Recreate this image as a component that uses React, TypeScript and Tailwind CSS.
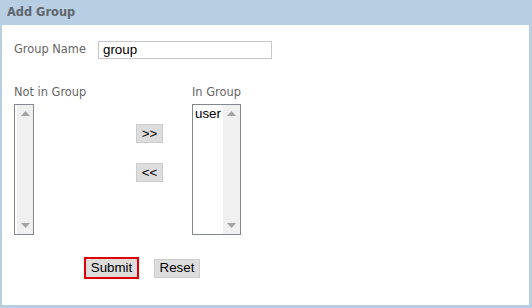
import React from 'react';

function ScrollList({ width, items = [] }: { width: string; items?: string[] }) {
  return (
    <div className={`${width} h-[131px] border border-[#828790] bg-white flex`}>
      <div className="flex-1 pl-[2px] pt-[1px] font-['Liberation_Sans',Arial,sans-serif] text-[13.33px] leading-[15px] text-black overflow-hidden">
        {items.map((it) => (
          <div key={it}>{it}</div>
        ))}
      </div>
      <div className="w-[17px] bg-[#f0f0f0] flex flex-col justify-between items-center py-[6px]">
        <svg width="9" height="5" viewBox="0 0 9 5">
          <path d="M0 5 L4.5 0 L9 5 Z" fill="#a3a3a3" />
        </svg>
        <svg width="9" height="5" viewBox="0 0 9 5">
          <path d="M0 0 L4.5 5 L9 0 Z" fill="#a3a3a3" />
        </svg>
      </div>
    </div>
  );
}

export default function App() {
  const label = "font-['DejaVu_Sans',Verdana,sans-serif] text-[11.4px] text-[#666]";
  const btn =
    "bg-[#dddddd] border border-[#cccccc] font-['Liberation_Sans',Arial,sans-serif] text-[13.33px] text-black leading-none flex items-center justify-center";
  return (
    <div className="w-[532px] h-[308px] bg-[#b8cfe3] pl-[2px] pr-[3px] pb-[3px] flex flex-col">
      {/* Header */}
      <div className="h-[25px] flex items-center pl-[5px] font-['DejaVu_Sans',Verdana,sans-serif] text-[11.4px] font-bold text-[#5f666d]">
        Add Group
      </div>

      {/* Body */}
      <div className="flex-1 bg-white pl-[12px] pt-[16px]">
        <div className="flex items-center h-[18px]">
          <span className={`${label} w-[84px]`}>Group Name</span>
          <div className="w-[174px] h-[18px] border border-[#c8c8c8] flex items-center pl-[4px] font-['Liberation_Sans',Arial,sans-serif] text-[13.33px] text-black">
            group
          </div>
        </div>

        <div className="flex mt-[25px]">
          <div className="w-[122px] flex flex-col">
            <div className={`${label} h-[16px] leading-[16px]`}>Not in Group</div>
            <div className="mt-[4px]">
              <ScrollList width="w-[20px]" />
            </div>
          </div>
          <div className="w-[56px] flex flex-col items-start pt-[40px] gap-[20px]">
            <div className={`${btn} w-[27px] h-[19px]`}>&gt;&gt;</div>
            <div className={`${btn} w-[27px] h-[19px]`}>&lt;&lt;</div>
          </div>
          <div className="flex flex-col">
            <div className={`${label} h-[16px] leading-[16px]`}>In Group</div>
            <div className="mt-[4px]">
              <ScrollList width="w-[49px]" items={['user']} />
            </div>
          </div>
        </div>

        <div className="flex items-center gap-[15px] mt-[22px] ml-[70px]">
          <div className={`${btn} w-[55px] h-[22px] !border-2 !border-[#e00000]`}>Submit</div>
          <div className={`${btn} w-[46px] h-[19px]`}>Reset</div>
        </div>
      </div>
    </div>
  );
}
